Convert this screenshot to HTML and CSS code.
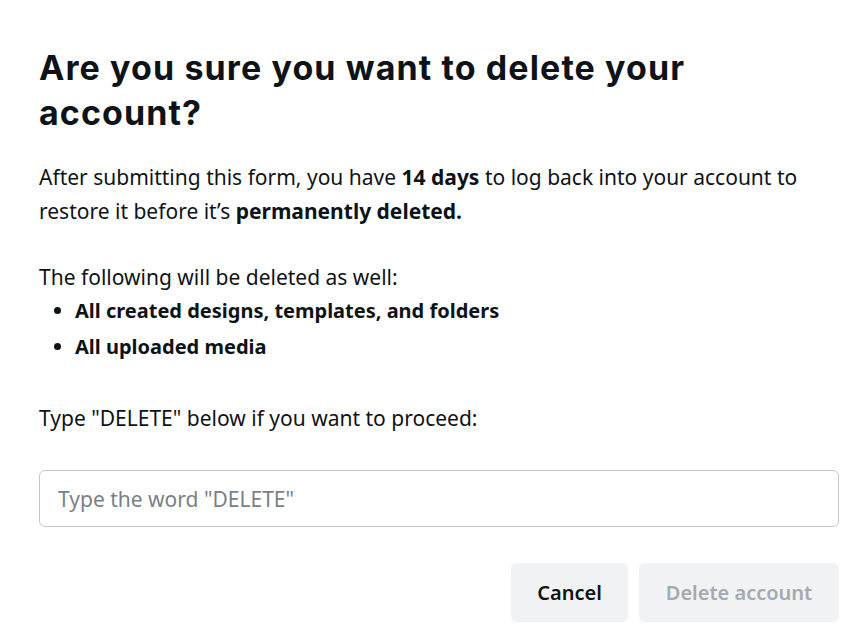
FILE: index.html
```html
<!DOCTYPE html>
<html lang="en">
<head>
<meta charset="utf-8">
<title>Delete account</title>
<link rel="stylesheet" href="styles.css">
</head>
<body>
<main class="dialog">
  <h1 class="title">Are you sure you want to delete your account?</h1>
  <p class="lead">After submitting this form, you have <strong>14 days</strong> to log back into your account to restore it before it’s <strong>permanently deleted.</strong></p>
  <p class="sub">The following will be deleted as well:</p>
  <ul class="list">
    <li>All created designs, templates, and folders</li>
    <li>All uploaded media</li>
  </ul>
  <p class="prompt">Type "DELETE" below if you want to proceed:</p>
  <input class="field" type="text" placeholder="Type the word &quot;DELETE&quot;">
  <div class="actions">
    <button class="btn btn-cancel" type="button">Cancel</button>
    <button class="btn btn-delete" type="button" disabled>Delete account</button>
  </div>
</main>
</body>
</html>
```

FILE: styles.css
```css
html, body {
  margin: 0;
  padding: 0;
  background: #ffffff;
}
body {
  font-family: "Noto Sans", "Open Sans", sans-serif;
  color: #0e1318;
}
.dialog {
  width: 800px;
  padding: 45px 30px 0 39px;
  display: flex;
  flex-direction: column;
}
.title {
  margin: 0;
  font-family: Inter, "Noto Sans", sans-serif;
  font-weight: 700;
  font-size: 34px;
  line-height: 45px;
  letter-spacing: 1.1px;
  width: 700px;
}
.lead {
  margin: 25px 0 0;
  font-size: 21px;
  line-height: 34px;
  width: 790px;
}
.lead strong, .list li {
  font-weight: 700;
}
.sub {
  margin: 33px 0 0;
  font-size: 21px;
  line-height: 32px;
}
.list {
  margin: 0;
  padding: 0 0 0 36px;
  font-size: 20px;
  line-height: 36px;
}
.prompt {
  margin: 36px 0 0;
  font-size: 21px;
  line-height: 34px;
}
.field {
  margin-top: 35px;
  height: 57px;
  box-sizing: border-box;
  border: 1px solid #c4c6cc;
  border-radius: 6px;
  padding: 0 18px;
  font-family: "Noto Sans", sans-serif;
  font-size: 21px;
  color: #0e1318;
  width: 800px;
}
.field::placeholder {
  color: #7a7f87;
}
.actions {
  margin-top: 36px;
  display: flex;
  justify-content: flex-end;
  gap: 11px;
}
.btn {
  height: 59px;
  border: none;
  border-radius: 6px;
  background: #f1f2f4;
  font-family: "Noto Sans", sans-serif;
  font-size: 20px;
  font-weight: 600;
  padding: 0;
}
.btn-cancel {
  color: #0e1318;
  width: 117px;
}
.btn-delete {
  color: #a5a9b0;
  width: 200px;
}
```
